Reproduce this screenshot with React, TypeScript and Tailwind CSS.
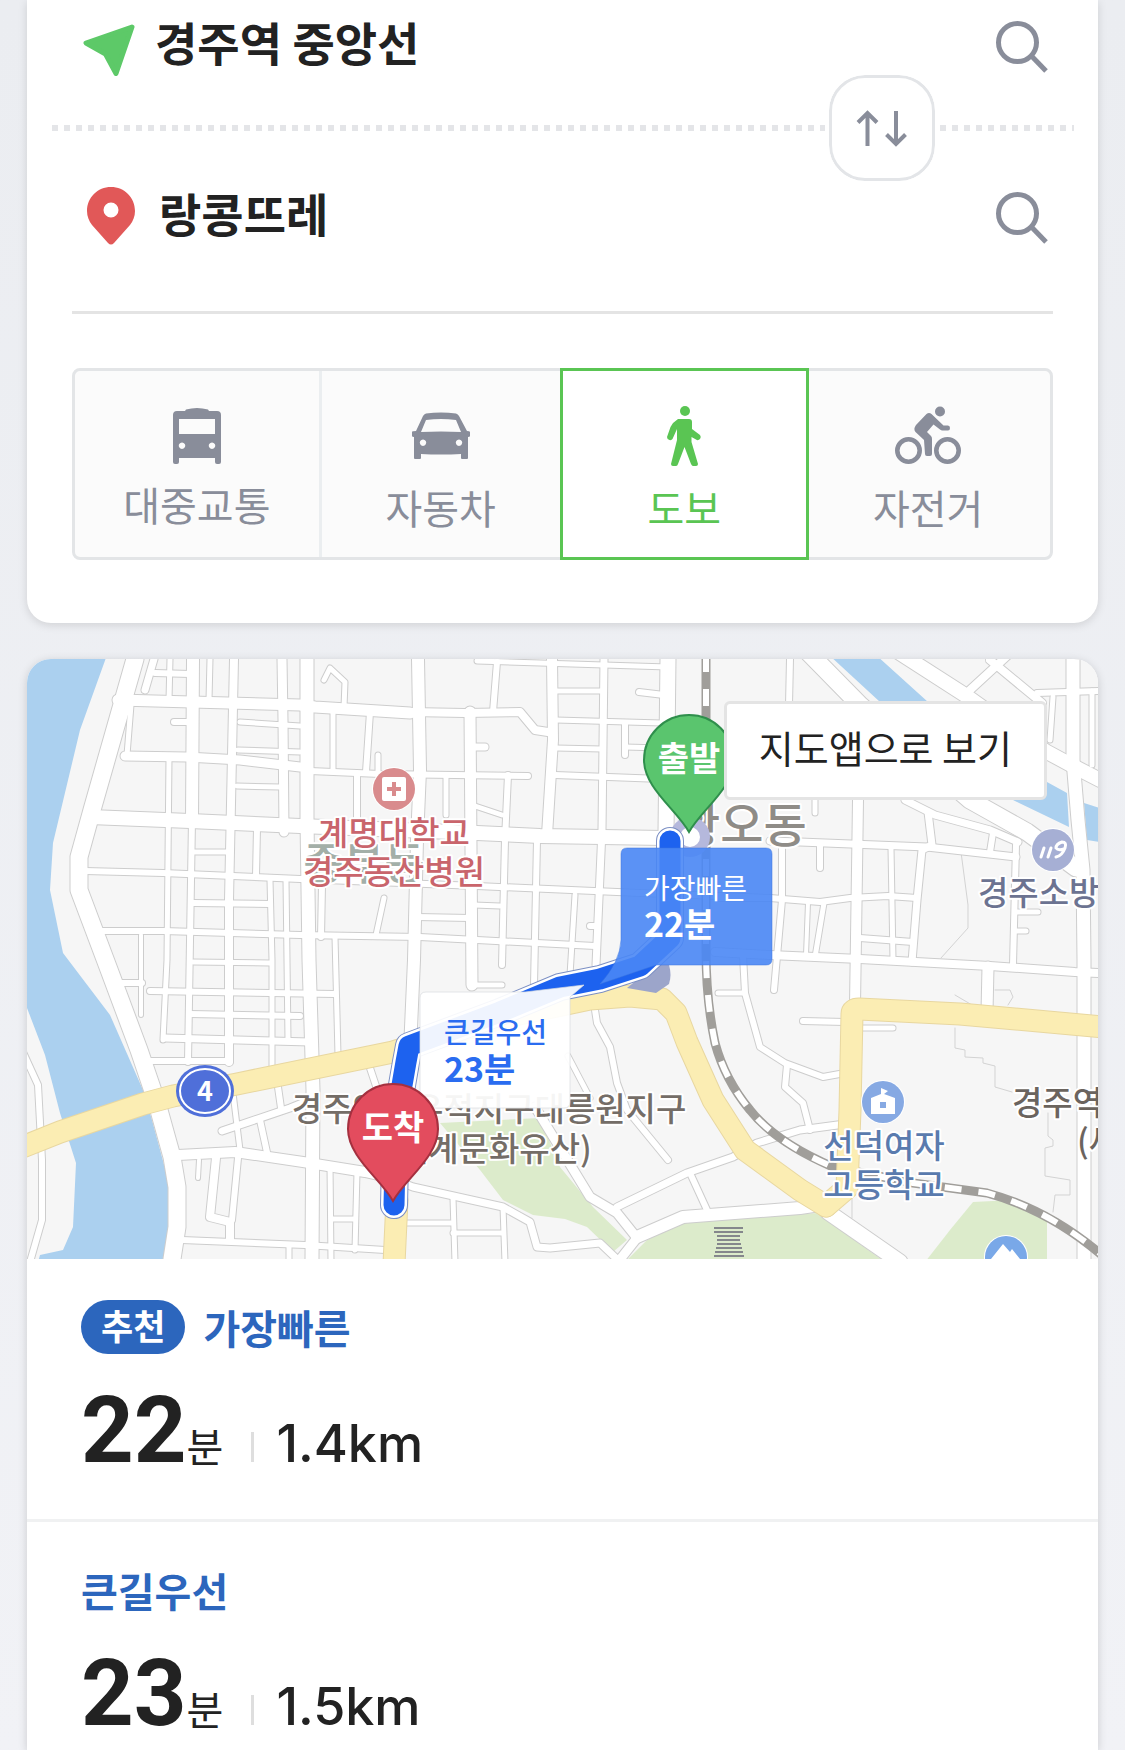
import { useState, type ReactNode } from "react";

type Mode = "transit" | "car" | "walk" | "bike";

interface RouteOption {
  id: string;
  title: string;
  minutes: number;
  distance: string;
  recommended: boolean;
}

const ROUTES: RouteOption[] = [
  { id: "fast", title: "가장빠른", minutes: 22, distance: "1.4km", recommended: true },
  { id: "main", title: "큰길우선", minutes: 23, distance: "1.5km", recommended: false },
];

// [width, path] for every white street
const STREETS: [number, string][] = [
  // riverside
  [17, "M135 659 L92 810 L79 857 L79 890 L108 967 L139 1050 L157 1103 L172 1157 L177 1187 L177 1227 L172 1259"],
  [6, "M22 1050 L38 1085 L42 1160 L42 1220 L30 1262"],
  // west, across
  [11, "M118 700 L300 705 L315 707 L410 713"],
  [8, "M410 712 L465 713 L520 712 L535 730 L548 732"],
  [9, "M125 756 L187 757 L240 760 L300 767"],
  [6, "M310 771 L380 774 L528 776"],
  [14, "M90 817 L190 821 L300 826 L477 833 L540 836 L664 838"],
  [6, "M85 871 L163 873 L300 879 L477 886 L640 893 L770 898"],
  [6, "M96 931 L163 931 L300 935 L420 937 L477 940 L595 946"],
  [6, "M155 673 L190 674"],
  [6, "M174 722 L190 722"],
  [5, "M240 722 L300 726"],
  [5, "M238 750 L300 752"],
  [5, "M237 786 L280 787"],
  [5, "M193 852 L228 852"],
  [6, "M193 903 L270 904"],
  [5, "M193 962 L270 963"],
  [6, "M118 983 L142 983"],
  [6, "M150 991 L335 994"],
  [6, "M190 1014 L300 1016"],
  [7, "M165 1038 L310 1042"],
  [6, "M150 1061 L230 1061"],
  // west, down
  [7, "M145 690 L154 659"],
  [5, "M127 755 L131 705"],
  [5, "M169 758 L167 960 L163 1040"],
  [4, "M141 935 L141 1015"],
  [12, "M193 659 L192 820"],
  [6, "M192 820 L188 1062"],
  [8, "M234 659 L229 900 L229 1062"],
  [5, "M210 659 L209 700"],
  [5, "M170 659 L169 700"],
  [9, "M282 659 L283 720 L284 832"],
  [6, "M257 828 L256 876"],
  [5, "M270 880 L272 960 L272 1075"],
  [5, "M286 880 L288 1040"],
  [13, "M307 659 L307 820 L308 890 L309 960 L313 1090 L312 1259"],
  [5, "M324 680 L330 668 L345 682 L344 707"],
  [5, "M333 711 L333 770"],
  [6, "M370 712 L366 772"],
  [6, "M357 776 L357 826"],
  [5, "M378 755 L378 774"],
  [6, "M322 885 L321 937"],
  [5, "M335 937 L338 1055"],
  [5, "M384 898 L376 935"],
  [12, "M418 659 L420 770 L417 840 L414 960 L410 1050"],
  // centre
  [11, "M470 712 L472 985"],
  [6, "M497 662 L493 712"],
  [10, "M552 659 L553 740 L547 835"],
  [6, "M537 840 L534 985"],
  [7, "M604 659 L602 830 L596 965"],
  [15, "M668 659 L666 832"],
  [6, "M508 775 L505 840 L502 965"],
  [5, "M446 776 L446 815"],
  [5, "M575 895 L570 975"],
  [5, "M477 661 L668 667"],
  [5, "M556 691 L602 691"],
  [6, "M639 692 L664 695"],
  [5, "M556 720 L662 723"],
  [5, "M556 748 L602 749"],
  [5, "M625 747 L662 748"],
  [6, "M625 723 L625 755"],
  [6, "M555 775 L662 779"],
  [7, "M475 747 L485 747"],
  [5, "M475 806 L502 815"],
  [6, "M417 917 L470 918"],
  [5, "M474 905 L500 906"],
  [6, "M590 926 L598 926"],
  [5, "M474 985 L502 985"],
  [6, "M593 997 L597 1023 L610 1047 L617 1083 L627 1110 L668 1160"],
  [5, "M568 1056 L590 1098"],
  // east
  [6, "M790 659 L789 705"],
  [10, "M858 800 L857 870 L855 1005"],
  [5, "M891 848 L893 960"],
  [7, "M928 812 L932 845 L922 850 L917 900 L912 962"],
  [6, "M1016 845 L1013 965"],
  [5, "M1016 912 L1038 912"],
  [5, "M1016 931 L1026 931"],
  [13, "M1073 659 L1073 760 L1078 820 L1083 870 L1084 960 L1084 1262"],
  [6, "M782 843 L782 900 L774 990"],
  [6, "M820 845 L820 868"],
  [5, "M815 800 L815 813"],
  [4, "M808 903 L806 955"],
  [5, "M824 903 L815 957"],
  [7, "M770 841 L800 842 L927 847 L1016 857"],
  [6, "M720 898 L770 898 L820 902 L850 898 L888 896 L917 898"],
  [6, "M860 938 L913 942"],
  [8, "M715 952 L770 955 L860 959 L990 966 L1075 972 L1100 973"],
  [17, "M806 650 L860 705 L970 800 L1027 832 L1076 868"],
  [14, "M895 650 L965 695 L1000 720 L1047 752 L1073 766 L1100 780"],
  [8, "M1008 655 L970 690"],
  [8, "M990 660 L1042 703"],
  [6, "M1037 693 L1098 691"],
  [5, "M1053 697 L1050 740"],
  [5, "M1092 691 L1092 765"],
  [7, "M905 800 L935 815 L990 830 L1018 842"],
  [6, "M993 833 L990 852"],
  [11, "M988 967 L987 1012"],
  [6, "M803 1021 L845 1022"],
  [5, "M860 1028 L893 1028"],
  [6, "M743 955 L745 993 L760 1047 L785 1063 L823 1077 L845 1073"],
  [5, "M718 993 L745 993"],
  [6, "M787 1065 L785 1087 L803 1103 L810 1130"],
  // south west
  [10, "M178 1155 L235 1152 L303 1162 L365 1172 L400 1180"],
  [7, "M400 1182 L413 1187 L503 1207 L530 1222 L537 1247 L550 1248 L600 1243 L620 1262"],
  [7, "M222 1131 L290 1108 L315 1098"],
  [5, "M232 1085 L240 1150"],
  [6, "M277 1080 L281 1108"],
  [6, "M260 1120 L268 1157"],
  [8, "M216 1158 L210 1217 L230 1222 L230 1240"],
  [6, "M238 1158 L232 1220"],
  [4, "M199 1160 L198 1178"],
  [6, "M182 1240 L305 1245 L385 1250"],
  [5, "M289 1247 L289 1262"],
  [5, "M330 1165 L331 1262"],
  [5, "M357 1172 L355 1250"],
  [5, "M332 1219 L355 1219"],
  [6, "M370 1068 L378 1092"],
  // south
  [5, "M453 1198 L455 1262"],
  [5, "M503 1207 L505 1262"],
  [5, "M453 1233 L503 1233"],
  [5, "M405 1223 L453 1223"],
  [9, "M535 1107 L590 1197 L617 1213 L637 1238 L618 1262"],
  [7, "M617 1207 L687 1173 L733 1157 L757 1143 L800 1130 L845 1124"],
  [6, "M690 1173 L707 1210"],
  [12, "M637 1237 L683 1217 L800 1208 L820 1205"],
  [15, "M828 1212 L900 1262"],
];

const PARCEL_LINES = [
  "M955 995 L972 1005 L978 1012",
  "M995 990 H1010 L1013 997 L1008 1005",
  "M955 1028 V1048 L965 1050 V1057 L983 1058 V1063 L995 1066 V1087 L1012 1092",
  "M1048 1113 V1136 L1053 1140 V1146 L1045 1148 V1176 L1070 1180 V1195 H1055 L1053 1212",
  "M961 852 L968 905 L968 928 L941 958",
  "M852 1190 V1218",
];

const MAIN_ROADS = [
  "M20 1148 L60 1132 L143 1104 L173 1096 L237 1084 L393 1052 L500 1018 L590 999 L630 996 L662 999 L676 1013 L687 1042 L713 1100 L745 1150 L800 1190 L826 1206",
  "M826 1206 L847 1188 L850 1110 L852 1014 Q852 1009 859 1009 L960 1014 L1104 1027",
  "M397 1200 L394 1264",
];

const RAILWAY =
  "M706 655 V950 Q706 1000 715 1043 Q725 1080 750 1110 Q775 1142 833 1167 L913 1183 L987 1193 Q1050 1210 1104 1257";

const WALK_PATH =
  "M670 841 V938 L640 966 L600 979 L560 987 L500 1012 L409 1046 L406 1062 L396 1120 L394 1205";

const PIN = "M0 0 C-12 -22 -45 -44 -45 -72 A45 45 0 0 1 45 -72 C45 -44 12 -22 0 0 Z";

function MapLabel({ x, y, fill, size = 33, anchor = "middle", children }: {
  x: number;
  y: number;
  fill: string;
  size?: number;
  anchor?: "start" | "middle";
  children: ReactNode;
}) {
  return (
    <text
      x={x}
      y={y}
      fill={fill}
      fontSize={size}
      textAnchor={anchor}
      fontWeight={500}
      stroke="#fff"
      strokeWidth={4}
      strokeLinejoin="round"
      paintOrder="stroke"
    >
      {children}
    </text>
  );
}

function RouteMap() {
  return (
    <svg
      viewBox="27 659 1071 600"
      preserveAspectRatio="xMidYMid slice"
      className="block h-[600px] w-full"
      role="img"
      aria-label="경로 지도"
    >
      <rect x="0" y="600" width="1200" height="700" fill="#f6f6f6" />

      {/* parks */}
      <g fill="#dcebcb">
        <path d="M440 1123 L540 1118 L560 1167 L593 1207 L627 1240 L613 1252 L587 1227 L565 1219 L533 1215 L503 1200 L480 1170Z" />
        <path d="M625 1262 L647 1240 L683 1223 L817 1213 L885 1262Z" />
        <path d="M925 1262 L950 1230 L973 1202 L1013 1200 L1047 1218 V1262Z" />
      </g>

      {/* rivers */}
      <g fill="#abd0ef">
        <path d="M27 655 H107 L80 730 L53 843 L50 890 L63 953 L110 1015 L143 1090 L152 1120 L170 1187 L169 1227 L163 1262 H38 L40 1255 L63 1250 L73 1227 L76 1163 L60 1113 L45 1055 L27 1008Z" />
        <path d="M829 655 L876 655 L928 702 L1047 782 L1067 793 L1069 827 L1013 800 L880 702Z" />
        <path d="M1084 803 L1100 808 V842 L1087 840Z" />
      </g>

      {/* streets: every outline first so junctions merge */}
      <g fill="none" strokeLinejoin="round" strokeLinecap="round">
        {PARCEL_LINES.map((d) => (
          <path key={d} d={d} stroke="#d3d3d3" strokeWidth={1} />
        ))}
        {STREETS.map(([w, d]) => (
          <path key={d} d={d} stroke="#cdcdcd" strokeWidth={w + 2} />
        ))}
        {STREETS.map(([w, d]) => (
          <path key={d} d={d} stroke="#fff" strokeWidth={w} />
        ))}
        <path d={RAILWAY} stroke="#a09e9a" strokeWidth={9} strokeLinecap="butt" />
        <path d={RAILWAY} stroke="#fff" strokeWidth={6} strokeDasharray="17 17" strokeLinecap="butt" />
        {MAIN_ROADS.map((d) => (
          <path key={d} d={d} stroke="#e8d7a0" strokeWidth={23} />
        ))}
        {MAIN_ROADS.map((d) => (
          <path key={d} d={d} stroke="#fbedb3" strokeWidth={21} />
        ))}
      </g>
      <path d="M627 988 L655 965 L669 965 Q672 975 669 984 L656 993Z" fill="#9ca5ca" />

      {/* stone observatory */}
      <path
        d="M714 1228 h29 M714 1232 h29 M717 1236 h23 M717 1240 h23 M717 1244 h24 M716 1248 h26 M715 1252 h28 M714 1256 h30"
        stroke="#85878c"
        strokeWidth={2}
      />

      <g fontFamily='"Noto Sans CJK KR", sans-serif'>
        <MapLabel x={364} y={880} size={44} fill="#a3afa8">중부동</MapLabel>
        <MapLabel x={677} y={842} size={47} fill="#8f8c87" anchor="start">황오동</MapLabel>

        {/* hospital */}
        <circle cx="394" cy="789" r="22" fill="#fff" />
        <circle cx="394" cy="789" r="21" fill="#d98b8d" />
        <rect x="382" y="777" width="24" height="24" rx="2" fill="#fff" />
        <path d="M394 782 v14 M387 789 h14" stroke="#d98b8d" strokeWidth={4} />
        <MapLabel x={394} y={845} fill="#c9656c">계명대학교</MapLabel>
        <MapLabel x={394} y={884} fill="#c9656c">경주동산병원</MapLabel>

        {/* fire station */}
        <circle cx="1053" cy="850" r="22" fill="#fff" />
        <circle cx="1053" cy="850" r="21" fill="#a6afd4" />
        <path
          d="M1041 857 L1044 848 M1048 857 L1051 848 M1056 857 Q1062 856 1065 848 Q1067 842 1062 842 Q1056 844 1056 848 Q1058 851 1064 849"
          fill="none"
          stroke="#fff"
          strokeWidth={3}
          strokeLinecap="round"
        />
        <MapLabel x={978} y={905} fill="#6c7391" anchor="start">경주소방서</MapLabel>

        {/* school */}
        <circle cx="883" cy="1102" r="22" fill="#fff" />
        <circle cx="883" cy="1102" r="21" fill="#86a9e3" />
        <path d="M871 1114 V1098 L881 1094 V1088 L888 1091 L884 1094 L895 1098 V1114Z" fill="#fff" />
        <rect x="880" y="1102" width="6" height="6" fill="#86a9e3" />
        <MapLabel x={884} y={1158} fill="#5a7bae">선덕여자</MapLabel>
        <MapLabel x={884} y={1197} fill="#5a7bae">고등학교</MapLabel>

        {/* hill */}
        <circle cx="1006" cy="1257" r="22" fill="#fff" />
        <circle cx="1006" cy="1257" r="21" fill="#79a8e8" />
        <path d="M991 1259 L1003 1244 L1010 1252 L1012 1249 L1020 1259Z" fill="#fff" />

        <MapLabel x={489} y={1121} fill="#746d67">경주역사유적지구대릉원지구</MapLabel>
        <MapLabel x={489} y={1161} fill="#746d67">(세계문화유산)</MapLabel>
        <MapLabel x={1012} y={1115} fill="#6b645e" anchor="start">경주역사유적지구</MapLabel>
        <MapLabel x={1077} y={1153} fill="#6b645e" anchor="start">(세계문화유산)</MapLabel>

        {/* national road 4 */}
        <ellipse cx="205" cy="1091" rx="29" ry="26" fill="#4f6fd9" />
        <ellipse cx="205" cy="1091" rx="25" ry="22" fill="#4f6fd9" stroke="#fff" strokeWidth={2} />
        <text x="205" y="1101" textAnchor="middle" fill="#fff" fontSize={27} fontWeight={700}>4</text>

        {/* train station */}
        <circle cx="690" cy="837" r="20" fill="#b5b8dc" />
        <circle cx="690" cy="837" r="10" fill="#fff" />

        {/* walking route */}
        <g fill="none" strokeLinecap="round" strokeLinejoin="round">
          <path d={WALK_PATH} stroke="#7b8fc4" strokeWidth={28} />
          <path d={WALK_PATH} stroke="#fff" strokeWidth={26} />
          <path d={WALK_PATH} stroke="#1d62ef" strokeWidth={21} />
        </g>

        {/* time bubbles */}
        <path
          d="M627 848 H766 Q772 848 772 854 V959 Q772 965 766 965 H656 L600 984 Q620 962 621 940 V854 Q621 848 627 848Z"
          fill="#4a87f5"
          fillOpacity={0.9}
          stroke="#3c76e0"
          strokeOpacity={0.5}
        />
        <text x="644" y="899" fill="#fff" fontSize={28}>가장빠른</text>
        <text x="644" y="937" fill="#fff" fontSize={34} fontWeight={700}>22분</text>
        <path
          d="M426 992 H525 L584 985 L570 997 V1102 Q570 1108 564 1108 H426 Q420 1108 420 1102 V998 Q420 992 426 992Z"
          fill="#fff"
          fillOpacity={0.93}
          stroke="#d9dbe0"
          strokeOpacity={0.7}
        />
        <text x="444" y="1043" fill="#2a6cf0" fontSize={28} fontWeight={500}>큰길우선</text>
        <text x="444" y="1082" fill="#2a6cf0" fontSize={34} fontWeight={700}>23분</text>

        {/* start and end pins */}
        <path d={PIN} transform="translate(689 832)" fill="#5ac56e" stroke="#2f8f4c" strokeWidth={2} />
        <text x="689" y="771" textAnchor="middle" fill="#fff" fontSize={34} fontWeight={700}>출발</text>
        <path d={PIN} transform="translate(393 1201)" fill="#e34c5e" stroke="#a5303f" strokeWidth={2} />
        <text x="393" y="1140" textAnchor="middle" fill="#fff" fontSize={34} fontWeight={700}>도착</text>
      </g>
    </svg>
  );
}

function SearchIcon() {
  return (
    <svg viewBox="0 -8 52 60" className="h-[60px] w-[52px]" fill="none" stroke="#898d9a" strokeWidth={5}>
      <circle cx="21.5" cy="21.5" r="19" />
      <path d="M35.5 35 L50 50" />
    </svg>
  );
}

function StartIcon() {
  return (
    <svg viewBox="0 -14 52 66" className="h-[66px] w-[52px] shrink-0">
      <path
        d="M49 3 L3 19 L22.5 30 L33 49.5 Z"
        fill="#5dc968"
        stroke="#5dc968"
        strokeWidth={5}
        strokeLinejoin="round"
      />
    </svg>
  );
}

function GoalIcon() {
  return (
    <svg viewBox="0 -4 56 62" className="h-[62px] w-[56px] shrink-0">
      <path
        fill="#e15858"
        fillRule="evenodd"
        d="M28 0 C14.500 0 4 10.500 4 24 C4 29.500 6 34 9 38 L25 56 Q28 59 31 56 L47 38 C50 34 52 29.500 52 24 C52 10.500 41.500 0 28 0Z M28 15.500 a7.500 7.500 0 1 1 0 15 a7.500 7.500 0 1 1 0 -15Z"
      />
    </svg>
  );
}

function SwapIcon() {
  return (
    <svg viewBox="0 0 52 38" className="h-[38px] w-[52px]" fill="none" stroke="#898d9a" strokeWidth={4}>
      <path d="M11.500 37 V4 M2 13.500 L11.500 4 L21 13.500" />
      <path d="M40 2 V35 M30.500 25.500 L40 35 L49.500 25.500" />
    </svg>
  );
}

const MODE_ICONS: Record<Mode, ReactNode> = {
  transit: (
    <svg viewBox="0 0 66 60" className="h-[60px] w-[66px]" fill="currentColor" fillRule="evenodd">
      <path d="M22 2.500 Q33 -0.500 44 2.500 L45 4 H53 Q57 4 57 8 V55 Q57 57 55 57 H53 Q51 57 51 55 V51 H15 V55 Q15 57 13 57 H11 Q9 57 9 55 V8 Q9 4 13 4 H21Z M15 12 V27 H51 V12Z M18 35.500 a3.200 3.200 0 1 0 0.010 0Z M48 35.500 a3.200 3.200 0 1 0 0.010 0Z" />
    </svg>
  ),
  car: (
    <svg viewBox="0 0 66 60" className="h-[60px] w-[66px]" fill="currentColor" fillRule="evenodd">
      <path d="M15 10 Q16 8 18 7.500 Q33 5.500 48 7.500 Q50 8 51 10 L59 25 Q62 25 62 26 V30 Q62 31 60 31 V52 Q60 53 59 53 H54 Q53 53 53 52 V48 Q33 49 13 48 V52 Q13 53 12 53 H7 Q6 53 6 52 V31 Q4 31 4 30 V26 Q4 25 8 25Z M18 14 L13 26 Q33 25 53 26 L48 14 Q33 12 18 14Z M15 33.500 a3.200 3.200 0 1 0 0.010 0Z M51 33.500 a3.200 3.200 0 1 0 0.010 0Z" />
    </svg>
  ),
  walk: (
    <svg viewBox="0 0 66 60" className="h-[60px] w-[66px]" fill="currentColor">
      <circle cx="34" cy="5" r="5" />
      <path d="M27 13 H38 Q41 13 41 16 V23 L49 29 Q50.500 31 49 33 Q47 35 45 33.500 L40.500 31 V36 L47 58 Q47 60 45 60 H42 Q41 60 40 58 L33.500 41 L27 58 Q26.500 60 25 60 H22 Q20 60 20 58 L26 34 V23 L21.500 33 Q20.500 34.500 18.500 34 Q16 33.500 16 31 L19.500 21 Q22 16 27 13Z" />
    </svg>
  ),
  bike: (
    <svg viewBox="0 0 66 60" className="h-[60px] w-[66px]" fill="currentColor">
      <circle cx="45" cy="5.500" r="5" />
      <path d="M31.500 8 Q34 6 36.500 8 L48.500 19.500 H53 Q55 19.500 55 22 Q55 24.500 53 24.500 H47.500 Q46 24.500 45 23.500 L38.500 18.500 L32 26 L36 30 Q37 31 37 33 V48 Q37 50 35 50 H32 Q30 50 30 48 L29 34 L20.500 26 Q18 23 21 19Z" />
      <circle cx="13.500" cy="44.500" r="11.200" fill="none" stroke="currentColor" strokeWidth={4.600} />
      <circle cx="52.500" cy="44.500" r="11.200" fill="none" stroke="currentColor" strokeWidth={4.600} />
    </svg>
  ),
};

const MODES: { id: Mode; label: string }[] = [
  { id: "transit", label: "대중교통" },
  { id: "car", label: "자동차" },
  { id: "walk", label: "도보" },
  { id: "bike", label: "자전거" },
];

function PlaceField({ icon, label, value, onChange }: {
  icon: ReactNode;
  label: string;
  value: string;
  onChange: (v: string) => void;
}) {
  return (
    <div className="flex h-[86px] items-center gap-5 pl-14 pr-[50px]">
      {icon}
      <input
        type="text"
        aria-label={label}
        value={value}
        onChange={(e) => onChange(e.target.value)}
        className="h-[70px] min-w-0 flex-1 bg-transparent pb-1 text-[46px] font-bold text-[#222] outline-none"
      />
      <button type="button" aria-label={`${label} 검색`} className="shrink-0">
        <SearchIcon />
      </button>
    </div>
  );
}

function RouteRow({ route }: { route: RouteOption }) {
  return (
    <li className="border-b-[3px] border-[#f0f1f2] px-[54px] pb-10 pt-10 last:border-b-0 last:pb-0">
      <h3 className="flex h-14 items-center gap-[18px] text-[40px] font-bold text-[#2c66bd]">
        {route.recommended && (
          <span className="flex h-[54px] items-center rounded-full bg-[#2c66bd] px-5 pb-1 text-[35px] text-white">
            추천
          </span>
        )}
        {route.title}
      </h3>
      <p className="mt-7 flex h-24 items-baseline text-[#222]">
        <strong className="font-[Roboto] text-[92px] font-bold leading-[96px]">{route.minutes}</strong>
        <span className="text-[40px] leading-none">분</span>
        <span className="ml-7 mr-[22px] h-[30px] w-[3px] bg-[#dedede]" />
        <span className="font-[Inter] text-[52px] font-medium leading-none">{route.distance}</span>
      </p>
    </li>
  );
}

export default function App() {
  const [from, setFrom] = useState("경주역 중앙선");
  const [to, setTo] = useState("랑콩뜨레");
  const [mode, setMode] = useState<Mode>("walk");

  const swap = () => {
    setFrom(to);
    setTo(from);
  };

  return (
    <main className="flex min-h-screen flex-col gap-9 bg-linear-to-b from-[#ebedf1] to-[#f1f2f6] px-[27px] font-['Noto_Sans_CJK_KR',sans-serif]">
      {/* Search form */}
      <section className="rounded-b-3xl bg-white pb-[63px] shadow-[0_2px_10px_rgba(0,0,0,0.13)]">
        <PlaceField icon={<StartIcon />} label="출발지" value={from} onChange={setFrom} />
        <div className="relative mb-10 ml-[25px] mr-6 mt-[39px] h-[6px] bg-[repeating-linear-gradient(90deg,#e4e5e8_0_6px,transparent_6px_12px)]">
          <button
            type="button"
            aria-label="출발지와 도착지 바꾸기"
            onClick={swap}
            className="absolute right-[139px] top-1/2 flex h-[106px] w-[106px] -translate-y-1/2 items-center justify-center rounded-[36px] border-[3px] border-[#e3e5e8] bg-white outline-4 outline-white"
          >
            <SwapIcon />
          </button>
        </div>
        <PlaceField icon={<GoalIcon />} label="도착지" value={to} onChange={setTo} />

        <hr className="mx-[45px] mt-[54px] border-t-[3px] border-[#e4e4e4]" />

        <div className="mx-[45px] mt-[54px] grid h-[192px] grid-cols-4 rounded-lg border-[3px] border-[#e3e5e7] bg-[#fbfbfb]">
          {MODES.map((m) => (
            <button
              key={m.id}
              type="button"
              aria-pressed={mode === m.id}
              onClick={() => setMode(m.id)}
              className={`flex flex-col items-center justify-center gap-3 pt-3.5 text-[40px] leading-[58px] first:gap-2 first:pt-3 ${
                mode === m.id
                  ? "-m-[3px] border-[3px] border-[#5ac553] bg-white text-[#5ac553]"
                  : "text-[#898d9a] first:-mr-[3px] first:border-r-[3px] first:border-[#ebeef0]"
              }`}
            >
              {MODE_ICONS[m.id]}
              {m.label}
            </button>
          ))}
        </div>
      </section>

      {/* Map and results */}
      <section className="flex-1 overflow-hidden rounded-t-3xl bg-white shadow-[0_2px_10px_rgba(0,0,0,0.16)]">
        <div className="relative">
          <RouteMap />
          <a
            href="#map"
            className="absolute right-[51px] top-[42px] flex h-[99px] items-center rounded-md border-[3px] border-[#e4e4e4] bg-white px-8 pb-2 text-[38px] text-[#222]"
          >
            지도앱으로 보기
          </a>
        </div>
        <ul>
          {ROUTES.map((r) => (
            <RouteRow key={r.id} route={r} />
          ))}
        </ul>
      </section>
    </main>
  );
}
